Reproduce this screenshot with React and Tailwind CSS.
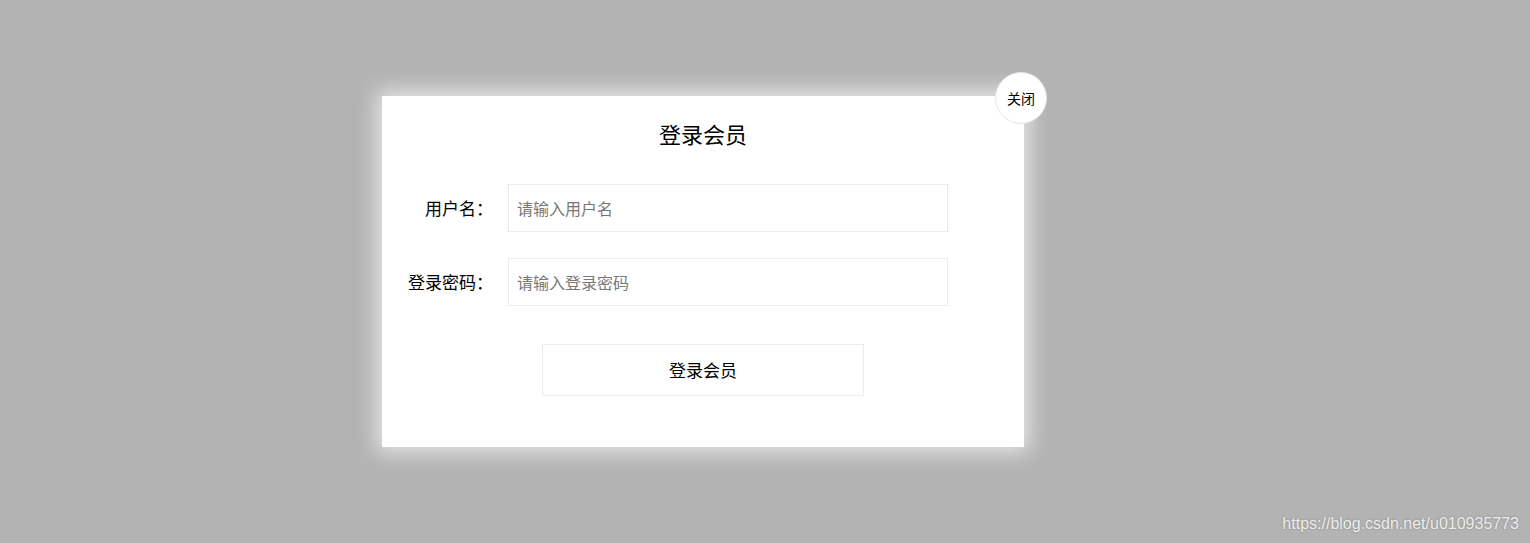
export default function App() {
  return (
    <div
      className="relative h-[543px] w-full overflow-hidden bg-[#b3b3b3] pl-[382px] pt-[96px]"
      style={{ fontFamily: '"Microsoft YaHei", "Noto Sans CJK SC", sans-serif' }}
    >
      <div className="relative flex h-[351px] w-[642px] flex-col items-center bg-white pt-[18px] shadow-[0_0_20px_5px_rgba(255,255,255,0.7)]">
        <button className="absolute right-[-23px] top-[-24px] flex h-[52px] w-[52px] items-center justify-center rounded-full border border-[#e6e6e6] bg-white text-[14px] text-black">
          关闭
        </button>

        <h2 className="text-[22px] leading-[38px] text-black">登录会员</h2>

        <div className="mt-[32px] flex w-full flex-col gap-[26px]">
          <div className="flex items-center">
            <label className="w-[111px] text-right text-[17px] text-black">用户名：</label>
            <input
              className="ml-[15px] h-[48px] w-[440px] border border-[#ececec] px-[8px] text-[16px] outline-none placeholder:text-[#777]"
              placeholder="请输入用户名"
            />
          </div>
          <div className="flex items-center">
            <label className="w-[111px] text-right text-[17px] text-black">登录密码：</label>
            <input
              type="password"
              className="ml-[15px] h-[48px] w-[440px] border border-[#ececec] px-[8px] text-[16px] outline-none placeholder:text-[#777]"
              placeholder="请输入登录密码"
            />
          </div>
        </div>

        <button className="mt-[38px] h-[52px] w-[322px] border border-[#ececec] bg-white text-[17px] text-black">
          登录会员
        </button>
      </div>

      <div
        className="absolute bottom-[7px] right-[11px] text-[16px] text-white/85 [text-shadow:0_0_2px_rgba(0,0,0,0.35)]"
        style={{ fontFamily: '"Liberation Sans", Arial, sans-serif' }}
      >
        https://blog.csdn.net/u010935773
      </div>
    </div>
  );
}
